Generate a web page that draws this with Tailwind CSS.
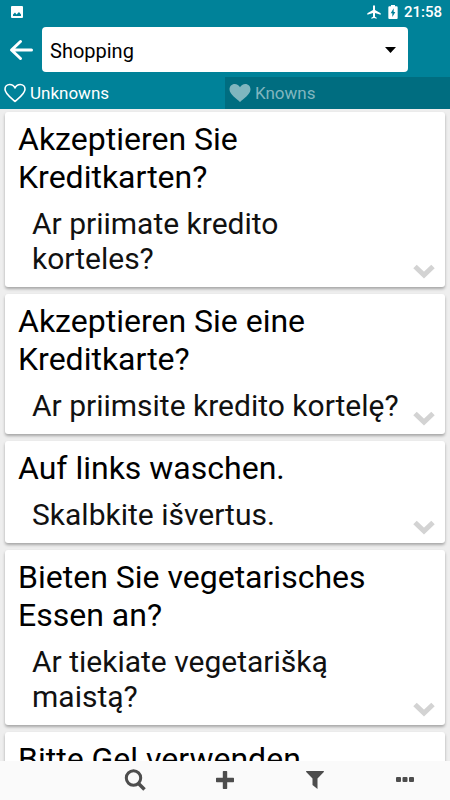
<!DOCTYPE html>
<html lang="de">
<head>
    <meta charset="UTF-8">
    <meta name="viewport" content="width=device-width, initial-scale=1">
    <title>Shopping</title>
    <script src="https://cdn.jsdelivr.net/npm/@tailwindcss/browser@4"></script>
</head>
<body class="bg-[#eeeeee] text-black font-[Roboto,sans-serif] h-screen flex flex-col overflow-hidden">

<header class="bg-[#008299] text-white shrink-0">
    <!-- status bar -->
    <div class="h-6 flex items-center justify-between pl-[11px] pr-2">
        <svg class="size-3" viewBox="0 0 12 12" aria-hidden="true">
            <rect width="12" height="12" rx="1" fill="#fff"/>
            <path d="M2 10V8.500L4 6.500 5.500 8.500 8 6 10 8.500V10z" fill="#008299"/>
        </svg>
        <div class="flex items-center gap-[3px]">
            <svg class="size-4" viewBox="0 0 24 24" fill="#fff" aria-hidden="true">
                <path d="M22 16v-2l-8.500-5V3.500a1.500 1.500 0 0 0-3 0V9L2 14v2l8.500-2.500V19L8 20.500V22l4-1 4 1v-1.500L13.500 19v-5.500z"/>
            </svg>
            <svg class="size-4" viewBox="0 0 24 24" aria-hidden="true">
                <path d="M17.500 3.500h-2.500V1.500H9v2H6.500A1.500 1.500 0 0 0 5 5v16a1.500 1.500 0 0 0 1.500 1.500h11A1.500 1.500 0 0 0 19 21V5a1.500 1.500 0 0 0-1.500-1.500z" fill="#fff"/>
                <path d="M11 19.500V14H8.500L13 6.500V12h2.500z" fill="#008299"/>
            </svg>
            <span class="text-[15px] leading-6 font-medium">21:58</span>
        </div>
    </div>

    <div class="flex items-center pt-[3px] pb-[5px] pl-[9px] pr-[42px]">
        <button type="button" aria-label="Zurück" class="w-[33px] shrink-0">
            <svg class="block size-6" viewBox="0 0 24 24" fill="none" stroke="#fff" stroke-width="3" stroke-linecap="round" stroke-linejoin="round">
                <path d="M22.500 12H3M11.500 3.500L2.500 12l9 8.500"/>
            </svg>
        </button>
        <div class="relative grow">
            <select aria-label="Kategorie" class="appearance-none block w-full h-[45px] bg-white text-black rounded pl-2 pr-8 pt-0.5 text-xl">
                <option>Shopping</option>
            </select>
            <svg class="absolute right-3 top-1/2 -translate-y-1/2 w-[11px] h-[6px] pointer-events-none" viewBox="0 0 11 6" aria-hidden="true">
                <path d="M0 0h11L5.500 6z" fill="#000"/>
            </svg>
        </div>
    </div>

    <nav class="grid grid-cols-2 h-8">
        <button type="button" class="flex items-center gap-1 pl-1 text-[17px] text-white">
            <svg class="w-[22px] h-5" viewBox="0 0 22 20" fill="none" stroke="#fff" stroke-width="1.600" stroke-linejoin="round" aria-hidden="true">
                <path d="M11 18.500C8 15.500 1 11 1 6.300 1 3.500 3 1.500 5.700 1.500c2.300 0 4.300 1.300 5.300 3.500 1-2.200 3-3.500 5.300-3.500C19 1.500 21 3.500 21 6.300c0 4.700-7 9.200-10 12.200z"/>
            </svg>
            <span class="pt-0.5">Unknowns</span>
        </button>
        <button type="button" class="flex items-center gap-1 pl-1 text-[17px] bg-[#006d80] text-[#80b6bf]">
            <svg class="w-[22px] h-5" viewBox="0 0 22 20" fill="currentColor" aria-hidden="true">
                <path d="M11 19C8 16 .5 11.500.5 6.300.5 3.300 2.700 1 5.700 1c2.300 0 4.300 1.300 5.300 3.200C12 2.300 14 1 16.300 1c3 0 5.200 2.300 5.200 5.300C21.500 11.500 14 16 11 19z"/>
            </svg>
            <span class="pt-0.5">Knowns</span>
        </button>
    </nav>
</header>

<main class="grow min-h-0 overflow-hidden px-[5px] pt-[3px]">
    <div class="flex flex-col gap-[7px]">
        <article class="relative bg-white rounded-[3px] shadow-[0_2px_3px_rgba(0,0,0,0.3)] pt-2 pb-[11px] px-[13px]">
            <h2 class="text-[32px] leading-[38px]">Akzeptieren Sie Kreditkarten?</h2>
            <p class="mt-2.5 pl-3.5 pr-7 text-[30px] leading-[35px] text-[#111111]">Ar priimate kredito korteles?</p>
            <button type="button" aria-label="Mehr" class="absolute right-2.5 bottom-2">
                <svg class="block w-[22px] h-[15px]" viewBox="0 0 22 15" fill="none" stroke="#d3d3d3" stroke-width="5"><path d="M2 2.500l9 8.500 9-8.500"/></svg>
            </button>
        </article>

        <article class="relative bg-white rounded-[3px] shadow-[0_2px_3px_rgba(0,0,0,0.3)] pt-2 pb-[11px] px-[13px]">
            <h2 class="text-[32px] leading-[38px]">Akzeptieren Sie eine Kreditkarte?</h2>
            <p class="mt-2.5 pl-3.5 pr-7 text-[30px] leading-[35px] text-[#111111]">Ar priimsite kredito kortelę?</p>
            <button type="button" aria-label="Mehr" class="absolute right-2.5 bottom-2">
                <svg class="block w-[22px] h-[15px]" viewBox="0 0 22 15" fill="none" stroke="#d3d3d3" stroke-width="5"><path d="M2 2.500l9 8.500 9-8.500"/></svg>
            </button>
        </article>

        <article class="relative bg-white rounded-[3px] shadow-[0_2px_3px_rgba(0,0,0,0.3)] pt-2 pb-[11px] px-[13px]">
            <h2 class="text-[32px] leading-[38px]">Auf links waschen.</h2>
            <p class="mt-2.5 pl-3.5 pr-7 text-[30px] leading-[35px] text-[#111111]">Skalbkite išvertus.</p>
            <button type="button" aria-label="Mehr" class="absolute right-2.5 bottom-2">
                <svg class="block w-[22px] h-[15px]" viewBox="0 0 22 15" fill="none" stroke="#d3d3d3" stroke-width="5"><path d="M2 2.500l9 8.500 9-8.500"/></svg>
            </button>
        </article>

        <article class="relative bg-white rounded-[3px] shadow-[0_2px_3px_rgba(0,0,0,0.3)] pt-2 pb-[11px] px-[13px]">
            <h2 class="text-[32px] leading-[38px]">Bieten Sie vegetarisches Essen an?</h2>
            <p class="mt-2.5 pl-3.5 pr-7 text-[30px] leading-[35px] text-[#111111]">Ar tiekiate vegetarišką maistą?</p>
            <button type="button" aria-label="Mehr" class="absolute right-2.5 bottom-2">
                <svg class="block w-[22px] h-[15px]" viewBox="0 0 22 15" fill="none" stroke="#d3d3d3" stroke-width="5"><path d="M2 2.500l9 8.500 9-8.500"/></svg>
            </button>
        </article>

        <article class="relative bg-white rounded-[3px] shadow-[0_2px_3px_rgba(0,0,0,0.3)] pt-2 pb-[11px] px-[13px]">
            <h2 class="text-[32px] leading-[38px]">Bitte Gel verwenden.</h2>
        </article>
    </div>
</main>

<footer class="h-[39px] pb-0.5 shrink-0 bg-[#fafafa] text-[#4d4d4d] grid grid-cols-5">
    <button type="button" aria-label="Suchen" class="col-start-2 flex items-center justify-center">
        <svg class="size-[22px]" viewBox="0 0 22 22" fill="none" stroke="currentColor" aria-hidden="true">
            <circle cx="9.500" cy="9" r="7.200" stroke-width="3"/>
            <path d="M14.500 14.500l6 6" stroke-width="3.500"/>
        </svg>
    </button>
    <button type="button" aria-label="Hinzufügen" class="flex items-center justify-center">
        <svg class="size-[18px]" viewBox="0 0 18 18" fill="currentColor" aria-hidden="true">
            <path d="M7.500 0h3a.7.7 0 0 1 .7.7v6.100h6.100a.7.7 0 0 1 .7.700v3a.7.7 0 0 1-.7.700h-6.100v6.100a.7.7 0 0 1-.7.700h-3a.7.7 0 0 1-.7-.700v-6.100H.7a.7.7 0 0 1-.7-.700v-3a.7.7 0 0 1 .7-.700h6.100V.7a.7.7 0 0 1 .7-.7z"/>
        </svg>
    </button>
    <button type="button" aria-label="Filtern" class="flex items-center justify-center">
        <svg class="size-[18px]" viewBox="0 0 18 18" fill="currentColor" aria-hidden="true">
            <path d="M.5 0h17c.5 0 .6.500.3.900L11.500 7.500V18L6.500 14V7.500L.2.900C-.1.500 0 0 .5 0z"/>
        </svg>
    </button>
    <button type="button" aria-label="Weitere Optionen" class="flex items-center justify-center">
        <svg class="w-[18px] h-[5px]" viewBox="0 0 18 5" fill="currentColor" aria-hidden="true">
            <rect width="5" height="5" rx="1"/>
            <rect x="6.500" width="5" height="5" rx="1"/>
            <rect x="13" width="5" height="5" rx="1"/>
        </svg>
    </button>
</footer>

</body>
</html>
